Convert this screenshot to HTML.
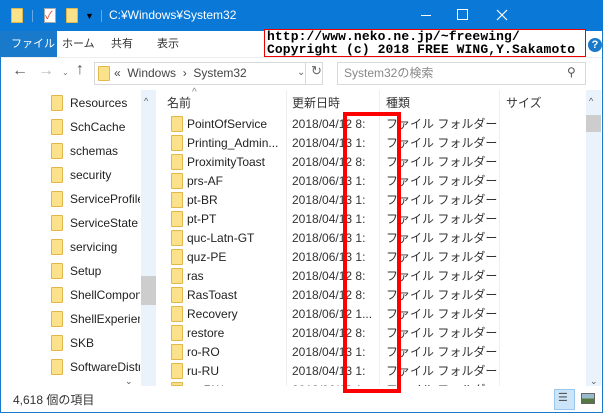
<!DOCTYPE html>
<html><head><meta charset="utf-8"><style>
*{margin:0;padding:0;box-sizing:border-box}
body{width:603px;height:413px;overflow:hidden;background:#fff;font-family:"Liberation Sans","Noto Sans CJK JP",sans-serif;font-size:12px;color:#000;position:relative}
.a{position:absolute}
.f{position:absolute;width:12px;height:16px;background:#fbe18a;border:1px solid #e3b84a;border-radius:1px}
.t{position:absolute;white-space:nowrap;line-height:14px}
</style></head><body>
<div class="a" style="left:0;top:0;width:603px;height:413px;border:1px solid #1979ca"></div>
<div class="a" style="left:0;top:0;width:603px;height:31px;background:#0a78d7"></div>
<div class="f" style="left:11px;top:8px;width:12px;height:15px;background:#fbe18a"></div>
<div class="a" style="left:32px;top:10px;width:1px;height:12px;background:#6aa8e8"></div>
<div class="a" style="left:44px;top:8px;width:12px;height:15px;background:#fff;border:1px solid #aaa"></div>
<div class="t" style="left:45px;top:9px;color:#e04020;font-size:11px">✓</div>
<div class="f" style="left:66px;top:8px;height:15px"></div>
<div class="t" style="left:85px;top:9px;color:#000;font-size:9px">▼</div>
<div class="a" style="left:101px;top:10px;width:1px;height:12px;background:#6aa8e8"></div>
<div class="t" style="left:109px;top:8px;color:#fff;font-size:12px">C:¥Windows¥System32</div>
<div class="a" style="left:421px;top:15px;width:10px;height:1px;background:#fff"></div>
<div class="a" style="left:457px;top:9px;width:11px;height:11px;border:1px solid #fff"></div>
<svg class="a" style="left:496px;top:9px" width="12" height="12"><path d="M1 1L11 11M11 1L1 11" stroke="#fff" stroke-width="1.2"/></svg>
<div class="a" style="left:0;top:31px;width:57px;height:26px;background:#1979ca"></div>
<div class="t" style="left:11px;top:37px;color:#fff;font-size:11px">ファイル</div>
<div class="t" style="left:62px;top:37px;color:#333;font-size:11px">ホーム</div>
<div class="t" style="left:111px;top:37px;color:#333;font-size:11px">共有</div>
<div class="t" style="left:157px;top:37px;color:#333;font-size:11px">表示</div>
<div class="a" style="left:264px;top:29px;width:322px;height:28px;border:1px solid #e00;background:#fff"></div>
<div class="t" style="left:267px;top:30px;font-family:'Liberation Mono',monospace;font-size:13px;line-height:13px;font-weight:bold;letter-spacing:0.1px">http://www.neko.ne.jp/~freewing/<br>Copyright (c) 2018 FREE WING,Y.Sakamoto</div>
<div class="a" style="left:588px;top:38px;width:14px;height:14px;border-radius:7px;background:#1979ca;color:#fff;font-size:11px;text-align:center;line-height:14px;font-weight:bold">?</div>
<div class="a" style="left:1px;top:57px;width:601px;height:1px;background:#eee"></div>
<div class="t" style="left:12px;top:64px;color:#555;font-size:16px">←</div>
<div class="t" style="left:38px;top:64px;color:#bbb;font-size:16px">→</div>
<div class="t" style="left:62px;top:66px;color:#777;font-size:8px">⌄</div>
<div class="t" style="left:76px;top:63px;color:#555;font-size:16px">↑</div>
<div class="a" style="left:94px;top:62px;width:229px;height:23px;border:1px solid #d9d9d9"></div>
<div class="a" style="left:305px;top:62px;width:1px;height:23px;background:#d9d9d9"></div>
<div class="f" style="left:98px;top:66px;height:15px"></div>
<div class="t" style="left:114px;top:66px;color:#444">«&nbsp; Windows &nbsp;› &nbsp;System32</div>
<div class="t" style="left:297px;top:66px;color:#666;font-size:10px">⌄</div>
<div class="t" style="left:311px;top:64px;color:#666;font-size:13px">↻</div>
<div class="a" style="left:337px;top:62px;width:249px;height:23px;border:1px solid #d9d9d9"></div>
<div class="t" style="left:344px;top:66px;color:#888">System32の検索</div>
<div class="t" style="left:567px;top:65px;color:#555;font-size:12px">⚲</div>
<div class="a" style="left:141px;top:90px;width:15px;height:296px;background:#eaf3fb"></div>
<div class="a" style="left:141px;top:276px;width:15px;height:29px;background:#cdcdcd"></div>
<div class="t" style="left:144px;top:94px;color:#555;font-size:9px">^</div>
<div class="t" style="left:125px;top:374px;color:#555;font-size:9px">⌄</div>
<div id="nav"></div>
<div class="a" style="left:286px;top:90px;width:1px;height:296px;background:#eee"></div>
<div class="a" style="left:379px;top:90px;width:1px;height:296px;background:#eee"></div>
<div class="a" style="left:499px;top:90px;width:1px;height:296px;background:#eee"></div>
<div class="t" style="left:192px;top:86px;color:#888;font-size:10px">^</div>
<div class="t" style="left:167px;top:96px;color:#333">名前</div>
<div class="t" style="left:292px;top:96px;color:#333">更新日時</div>
<div class="t" style="left:386px;top:96px;color:#333">種類</div>
<div class="t" style="left:506px;top:96px;color:#333">サイズ</div>
<div class="a" style="left:586px;top:90px;width:15px;height:296px;background:#eaf3fb"></div>
<div class="a" style="left:586px;top:115px;width:15px;height:17px;background:#cdcdcd"></div>
<div class="t" style="left:589px;top:94px;color:#555;font-size:9px">^</div>
<div class="t" style="left:590px;top:374px;color:#555;font-size:9px">⌄</div>
<div id="rows"></div>
<div class="a" style="left:1px;top:386px;width:601px;height:26px;background:#fff"></div>
<div class="t" style="left:13px;top:393px;color:#333">4,618 個の項目</div>
<div class="a" style="left:554px;top:389px;width:21px;height:21px;border:1px solid #99c8ee;background:#cce4f7"></div>
<div class="t" style="left:558px;top:391px;color:#555;font-size:11px">☰</div>
<div class="a" style="left:581px;top:393px;width:14px;height:11px;border:1px solid #666;background:linear-gradient(#9bc 50%,#574 50%)"></div>
<div class="a" style="left:343px;top:112px;width:58px;height:281px;border:4px solid #f00"></div>
<script>
var n=["Resources","SchCache","schemas","security","ServiceProfile","ServiceState","servicing","Setup","ShellCompon","ShellExperien","SKB","SoftwareDistr","Speech"],h="";
n.forEach(function(s,i){var y=103+24*i-8;if(y>378)return;h+='<div class="f" style="left:51px;top:'+y+'px"></div><div class="t" style="left:70px;top:'+(y+1)+'px;width:70px;overflow:hidden;color:#222">'+s+'</div>'});
document.getElementById('nav').innerHTML=h;
var r=[["PointOfService","2018/04/12 8:"],["Printing_Admin...","2018/04/13 1:"],["ProximityToast","2018/04/12 8:"],["prs-AF","2018/06/13 1:"],["pt-BR","2018/04/13 1:"],["pt-PT","2018/04/13 1:"],["quc-Latn-GT","2018/06/13 1:"],["quz-PE","2018/06/13 1:"],["ras","2018/04/12 8:"],["RasToast","2018/04/12 8:"],["Recovery","2018/06/12 1..."],["restore","2018/04/12 8:"],["ro-RO","2018/04/13 1:"],["ru-RU","2018/04/13 1:"],["rw-RW","2018/06/13 1:"]];h="";
r.forEach(function(a,i){var y=124+19*i-8;var c=y>372?'height:'+(386-y-1)+'px;overflow:hidden':'';h+='<div class="f" style="left:171px;top:'+y+'px;height:'+Math.min(16,386-y)+'px"></div><div class="t" style="left:187px;top:'+(y+1)+'px;color:#222;'+c+'">'+a[0]+'</div><div class="t" style="left:292px;top:'+(y+1)+'px;color:#333;'+c+'">'+a[1]+'</div><div class="t" style="left:386px;top:'+(y+1)+'px;color:#333;'+c+'">ファイル フォルダー</div>'});
document.getElementById('rows').innerHTML=h;
</script>
</body></html>
